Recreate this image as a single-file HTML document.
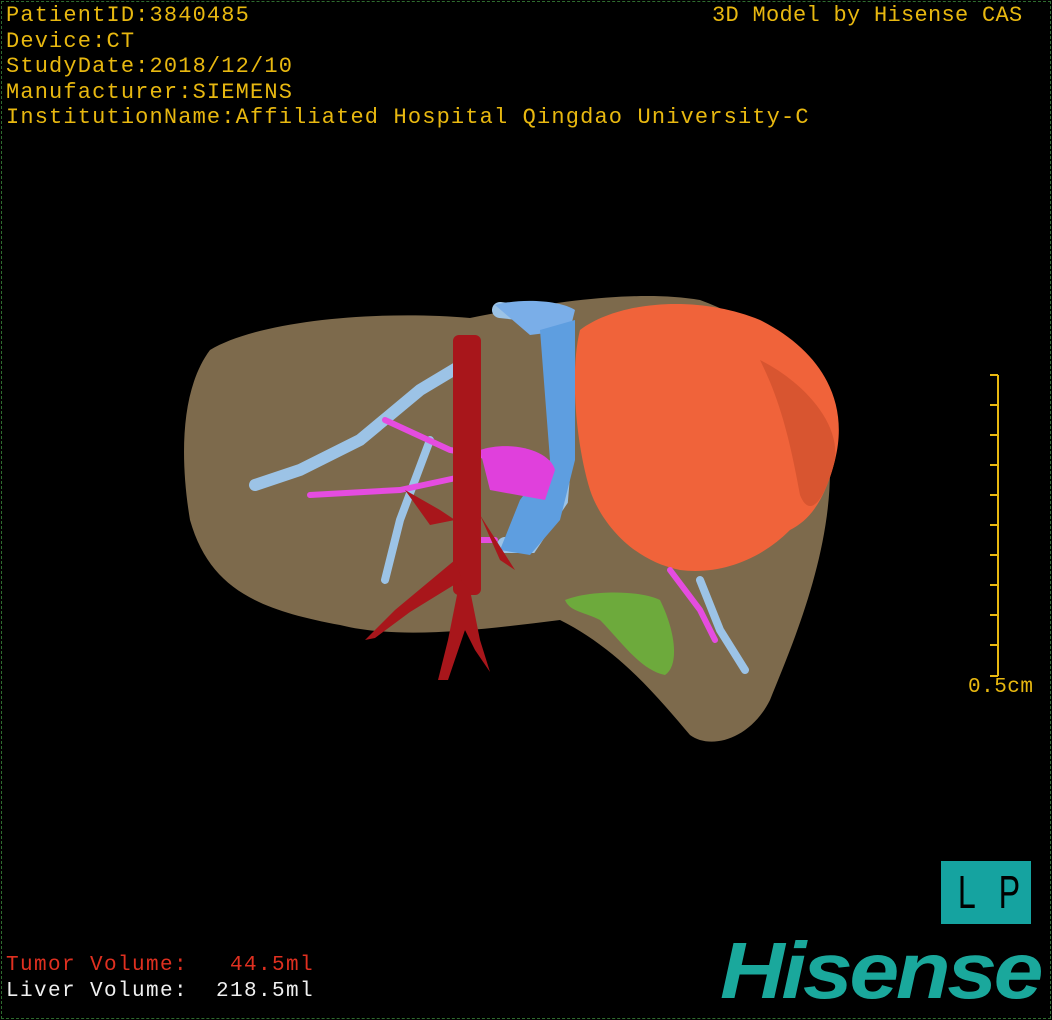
<!DOCTYPE html>
<html><head><meta charset="utf-8"><style>
html,body{margin:0;padding:0;background:#000;}
body{width:1052px;height:1020px;position:relative;overflow:hidden;font-family:"Liberation Mono","Noto Sans CJK SC",monospace;}
.frame{position:absolute;left:1px;top:1px;width:1048px;height:1016px;border:1px dashed #2e6b2e;}
.info{position:absolute;left:6px;top:3px;color:#e8b810;font-size:22px;line-height:25.5px;letter-spacing:1.15px;white-space:pre;}
.tr{position:absolute;left:712px;top:3px;color:#e8b810;font-size:22px;line-height:25px;letter-spacing:0.3px;}
.vol{position:absolute;left:6px;top:953px;font-size:21px;line-height:26px;white-space:pre;letter-spacing:1.4px}
.lp{position:absolute;left:941px;top:861px;width:90px;height:63px;background:#15a3a0;color:#000;font-size:46px;line-height:63px;font-family:"Liberation Sans Narrow","Liberation Sans",sans-serif;}
.lp span{position:absolute;top:0}
.logo{position:absolute;left:720px;top:930px;color:#1aa89c;font:italic bold 80px/82px "Liberation Sans",sans-serif;letter-spacing:-3px;transform:scaleX(1.12);transform-origin:left top;white-space:nowrap;}
.scale{position:absolute;left:968px;top:676px;color:#e8b810;font-size:21px;letter-spacing:0.5px}
</style></head><body>
<div class="frame"></div>
<div class="info">PatientID:3840485
Device:CT
StudyDate:2018/12/10
Manufacturer:SIEMENS
InstitutionName:Affiliated Hospital Qingdao University-C</div>
<div class="tr">3D Model by Hisense CAS</div>
<svg width="1052" height="1020" style="position:absolute;left:0;top:0">
<path d="M210 350 C260 320 380 310 470 318 C560 300 640 290 700 300 C780 330 830 380 830 470 C830 560 790 650 770 700 C750 740 710 750 690 735 C660 700 620 650 560 620 C480 630 400 640 340 625 C260 610 210 590 190 520 C180 460 180 390 210 350 Z" fill="#7d6a4c"/>
<path d="M580 330 C620 300 700 295 760 320 C820 350 850 400 835 460 C825 500 810 520 790 530 C760 560 720 575 680 570 C630 560 600 520 590 490 C575 440 570 370 580 330 Z" fill="#f0633a"/>
<path d="M760 360 C800 380 840 420 835 460 C825 500 810 520 800 495 C790 440 780 400 760 360Z" fill="#d85530"/>
<g fill="none" stroke="#9cc3e6" stroke-width="16" stroke-linecap="round">
<path d="M500 310 L545 315 L560 360 L565 440 L560 500 L530 545 L505 545"/>
<path d="M470 360 L420 390 L360 440 L300 470 L255 485" stroke-width="12"/>
<path d="M430 440 L400 520 L385 580" stroke-width="8"/>
<path d="M700 580 L720 630 L745 670" stroke-width="8"/>
</g>
<path d="M495 305 C520 298 560 300 575 310 L570 330 L530 335 Z" fill="#7aaee8"/>
<path d="M540 330 L575 320 L575 460 L560 520 L530 555 L500 550 L520 500 L550 460 Z" fill="#5e9ee0"/>
<g fill="none" stroke="#e54ce0" stroke-width="6" stroke-linecap="round">
<path d="M385 420 L450 450 L510 460 L550 470"/>
<path d="M310 495 L400 490 L470 475"/>
<path d="M670 570 L700 610 L715 640"/>
<path d="M480 540 L495 540"/>
</g>
<path d="M480 450 C510 440 550 450 555 470 L545 500 L490 490Z" fill="#e040dc"/>
<g fill="#a8161b">
<rect x="453" y="335" width="28" height="260" rx="6"/>
<path d="M455 560 L395 610 L365 640 L375 638 L410 612 L462 580Z"/>
<path d="M460 580 L448 640 L438 680 L448 680 L465 630 L475 650 L490 672 L480 640 L470 590Z"/>
<path d="M405 490 L430 525 L455 520 L440 510Z"/>
<path d="M480 515 L500 560 L515 570"/>
</g>
<path d="M565 600 C590 590 640 590 660 600 C675 630 680 665 665 675 C640 670 620 640 600 620 C585 612 570 612 565 600Z" fill="#6ab53a" opacity="0.85"/>
<g stroke="#e8b810" stroke-width="2">
<line x1="998" y1="375" x2="998" y2="676"/>
<line x1="990" y1="375" x2="998" y2="375"/><line x1="990" y1="405" x2="998" y2="405"/>
<line x1="990" y1="435" x2="998" y2="435"/><line x1="990" y1="465" x2="998" y2="465"/>
<line x1="990" y1="495" x2="998" y2="495"/><line x1="990" y1="525" x2="998" y2="525"/>
<line x1="990" y1="555" x2="998" y2="555"/><line x1="990" y1="585" x2="998" y2="585"/>
<line x1="990" y1="615" x2="998" y2="615"/><line x1="990" y1="645" x2="998" y2="645"/>
<line x1="990" y1="676" x2="998" y2="676"/>
</g>
</svg>
<div class="scale">0.5cm</div>
<div class="lp"><span style="left:13px;transform:scaleX(0.7)">L</span><span style="left:53px;transform:scaleX(0.7)">P</span></div>
<div class="logo">Hisense</div>
<div class="vol"><span style="color:#e03020">Tumor Volume:   44.5ml</span>
<span style="color:#f0f0f0">Liver Volume:  218.5ml</span></div>
</body></html>
